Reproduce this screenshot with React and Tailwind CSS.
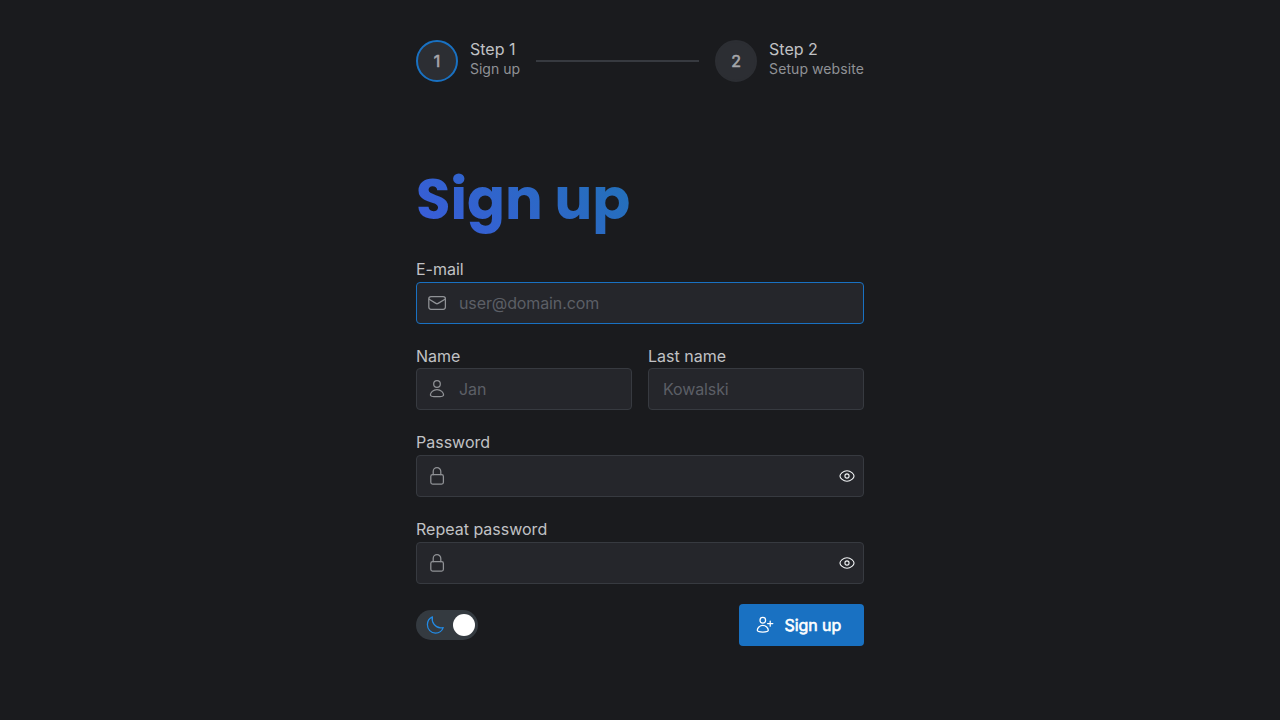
import React from "react";

function Svg({ size = 20, className = "", children }) {
  return (
    <svg width={size} height={size} viewBox="0 0 20 20" fill="none" stroke="currentColor" strokeWidth="1.25" strokeLinecap="round" strokeLinejoin="round" className={className}>
      {children}
    </svg>
  );
}

const Mail = () => (
  <Svg>
    <rect x="1.8" y="3.5" width="16.6" height="12.8" rx="2.2" />
    <path d="M2.2 6.2 L8.9 10.4 Q10 11.1 11.1 10.4 L18 6.2" />
  </Svg>
);

const User = () => (
  <Svg>
    <circle cx="10" cy="5" r="3.3" />
    <path d="M10 10.6c3.9 0 6.6 3 6.6 5.3 0 1.2-3 1.8-6.6 1.8s-6.6-.6-6.6-1.8c0-2.3 2.7-5.3 6.6-5.3z" />
  </Svg>
);

const Lock = () => (
  <Svg>
    <rect x="3.8" y="8.7" width="12.6" height="9.3" rx="1.8" />
    <path d="M6.2 8.7V5.4a3.8 3.8 0 0 1 7.6 0v3.3" />
  </Svg>
);

const Eye = () => (
  <Svg size={16} className="text-[#f1f3f5]">
    <path strokeWidth="1.4" d="M1.2 10c0-2.6 4.1-6.6 8.8-6.6s8.8 4 8.8 6.6-4.1 6.6-8.8 6.6S1.2 12.6 1.2 10z" />
    <circle strokeWidth="1.4" cx="10" cy="10" r="2.6" />
  </Svg>
);

const Moon = () => (
  <Svg className="text-[#228be6]">
    <path d="M7.4 1.9C4.3 3.2 2.4 6.2 2.4 9.8c0 4.6 3.6 8.2 8.1 8.2 3.4 0 6.6-2.2 7.7-5.4-1 .3-1.6.3-2.6.3-5.2-.5-9.4-5.3-8.2-11z" />
  </Svg>
);

const UserPlus = () => (
  <Svg>
    <circle cx="7.8" cy="5.2" r="2.8" />
    <path d="M7.8 10.4c3.1 0 5.5 2.7 5.5 4.9 0 1.1-2.5 1.7-5.5 1.7s-5.5-.6-5.5-1.7c0-2.2 2.4-4.9 5.5-4.9z" />
    <path d="M15.2 6v5.2M12.6 8.6h5.2" />
  </Svg>
);

function Step({ number, title, detail, active, detailClass = "" }) {
  return (
    <div className="flex items-start">
      <div className={`flex h-[42px] w-[42px] items-center justify-center rounded-full border-2 bg-[#2c2e33] text-base text-[#a6a7ab] [-webkit-text-stroke:0.6px_currentColor] ${active ? "border-[#1971c2]" : "border-[#2c2e33]"}`}>
        {number}
      </div>
      <div className="ml-3 flex flex-col pt-px whitespace-nowrap">
        <span className="text-base leading-4 text-[#c1c2c5]">{title}</span>
        <span className={`mt-[5px] text-sm leading-[14px] text-[#909296] ${detailClass}`}>{detail}</span>
      </div>
    </div>
  );
}

function Field({ label, icon, placeholder, type = "text", focused }) {
  return (
    <label className="block min-w-0 flex-1">
      <span className="block text-base leading-[24.8px] text-[#c1c2c5]">{label}</span>
      <span className={`flex h-[42px] items-center rounded border bg-[#25262b] ${focused ? "border-[#1971c2]" : "border-[#373a40]"}`}>
        {icon && <span className="flex w-[42px] shrink-0 justify-center pr-[2px] text-[#909296]">{icon}</span>}
        <input type={type} placeholder={placeholder} className={`h-full min-w-0 flex-1 bg-transparent text-base tracking-[-0.007em] text-[#c1c2c5] outline-none placeholder:text-[#5c5f66] ${icon ? "" : "pl-3.5"}`} />
        {type === "password" && <span className="mr-2 shrink-0"><Eye /></span>}
      </span>
    </label>
  );
}

export default function App() {
  return (
    <main className="flex h-screen justify-center bg-[#1a1b1e] font-['Inter',sans-serif]">
      <div className="w-[448px] pt-10">
        <div className="flex items-center">
          <Step number="1" title="Step 1" detail="Sign up" active />
          <div className="mx-4 h-0.5 flex-1 bg-[#373a40]" />
          <Step number="2" title="Step 2" detail="Setup website" detailClass="tracking-[0.006em]" />
        </div>
        <h1 className="mt-20 h-[76.8px] bg-linear-[45deg,#3b5bdb,#0c8599] bg-clip-text font-['Poppins','Inter',sans-serif] text-[56px] leading-[76.8px] font-bold text-transparent">
          Sign up
        </h1>
        <form className="mt-[18px] flex flex-col gap-5">
          <Field label="E-mail" icon={<Mail />} placeholder="user@domain.com" focused />
          <div className="flex gap-4">
            <Field label="Name" icon={<User />} placeholder="Jan" />
            <Field label="Last name" placeholder="Kowalski" />
          </div>
          <Field label="Password" icon={<Lock />} type="password" />
          <Field label="Repeat password" icon={<Lock />} type="password" />
          <div className="flex items-center justify-between">
            <button type="button" role="switch" aria-checked="true" aria-label="Dark mode" className="flex h-[30px] w-[62px] items-center justify-between rounded-full bg-[#343a40] pr-[3px] pl-[9px]">
              <Moon />
              <span className="h-[22px] w-[22px] rounded-full bg-white" />
            </button>
            <button type="button" className="flex h-[42px] w-[125px] items-center rounded bg-[#1971c2] pl-4 text-base text-white">
              <UserPlus />
              <span className="ml-[9.5px] tracking-[-0.004em] [-webkit-text-stroke:0.6px_currentColor]">Sign up</span>
            </button>
          </div>
        </form>
      </div>
    </main>
  );
}
